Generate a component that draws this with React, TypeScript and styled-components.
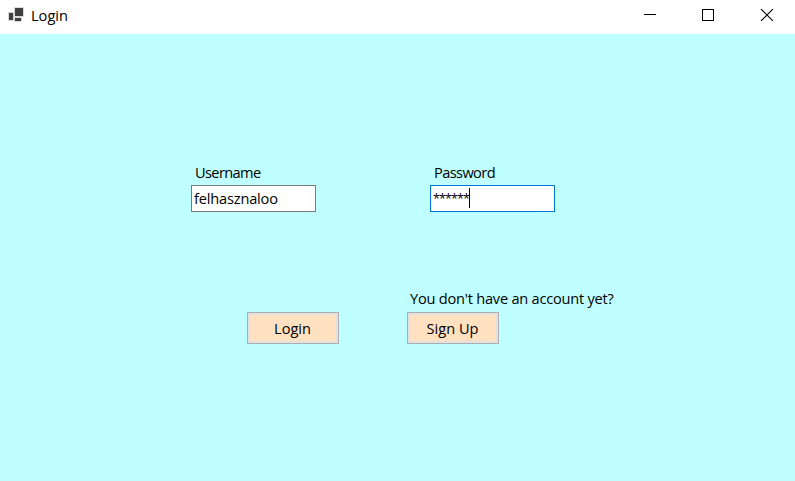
import React from "react";
import styled, { createGlobalStyle } from "styled-components";

const GlobalStyle = createGlobalStyle`
  * { box-sizing: border-box; }
  body { margin: 0; overflow: hidden; }
`;

const Window = styled.div`
  display: flex;
  flex-direction: column;
  width: 795px;
  height: 481px;
  background: #c0ffff;
  color: #000;
  font-family: "Segoe UI", "Open Sans", sans-serif;
  font-size: 14.6px;
  line-height: 18px;
`;

const TitleBar = styled.header`
  display: flex;
  align-items: flex-start;
  height: 34px;
  flex: none;
  padding-left: 8px;
  background: #fff;
`;

const AppIcon = styled.svg`
  display: block;
  flex: none;
  margin-top: 7px;
`;

const Text = styled.span<{ $spacing?: number }>`
  white-space: nowrap;
  letter-spacing: ${({ $spacing = 0 }) => $spacing}px;
`;

const Title = styled.div`
  flex: 1;
  padding: 6px 0 0 7px;
`;

const CaptionButton = styled.button`
  display: flex;
  justify-content: center;
  align-items: center;
  width: 58px;
  height: 30px;
  padding: 0;
  border: 0;
  background: transparent;
`;

const CaptionButtons = styled.div`
  display: flex;
  width: 174px;
`;

const Form = styled.main`
  display: flex;
  flex-direction: column;
  padding-top: 129px;
`;

const Fields = styled.div`
  display: flex;
  gap: 114px;
  padding-left: 191px;
`;

const Field = styled.label`
  display: flex;
  flex-direction: column;
  gap: 2px;
  width: 125px;
`;

const Caption = styled.div`
  height: 20px;
  padding-left: 4px;
`;

const Entry = styled.div<{ $focused?: boolean }>`
  display: flex;
  align-items: center;
  height: 27px;
  padding: 0 0 2px 2px;
  border: 1px solid ${({ $focused }) => ($focused ? "#0078d7" : "#7a7a7a")};
  background: #fff;
`;

const Mask = styled.span`
  width: 36px;
  height: 20px;
  font-size: 12.5px;
  line-height: 22px;
  letter-spacing: -0.86px;
  white-space: nowrap;
`;

const Caret = styled.i`
  width: 1px;
  height: 20px;
  margin-bottom: -1px;
  background: #000;
`;

const Actions = styled.div`
  display: flex;
  align-items: flex-end;
  gap: 68px;
  padding: 77px 0 0 247px;
`;

const SignUpGroup = styled.div`
  display: flex;
  flex-direction: column;
  gap: 3px;
`;

const Prompt = styled.div`
  height: 20px;
  padding-left: 3px;
`;

const Button = styled.button`
  width: 92px;
  height: 32px;
  padding: 0 1px 1px 0;
  border: 1px solid #adadad;
  background: #ffe0c0;
  box-shadow: inset 0 0 0 2px #e1e1e1;
  color: inherit;
  font: inherit;
`;

export default function App() {
  return (
    <Window>
      <GlobalStyle />
      <TitleBar>
        <AppIcon width="16" height="15" viewBox="0 0 16 15" shapeRendering="crispEdges">
          <path d="M6 0h10v10h-2v5H6v-1H0V5h6z" fill="#dadada" />
          <path d="M7 1h8v8H7zM1 6h4v7H1zM7 11h6v3H7z" fill="#404040" />
        </AppIcon>
        <Title><Text>Login</Text></Title>
        <CaptionButtons>
          <CaptionButton aria-label="Minimize">
            <svg width="12" height="12" shapeRendering="crispEdges"><path d="M0 5.5h12" stroke="#000" /></svg>
          </CaptionButton>
          <CaptionButton aria-label="Maximize">
            <svg width="12" height="12" shapeRendering="crispEdges"><path d="M.5.5h11v11H.5z" fill="none" stroke="#000" /></svg>
          </CaptionButton>
          <CaptionButton aria-label="Close">
            <svg width="14" height="12"><path d="M2 0l12 12M14 0L2 12" stroke="#000" strokeWidth="1.1" /></svg>
          </CaptionButton>
        </CaptionButtons>
      </TitleBar>
      <Form>
        <Fields>
          <Field>
            <Caption><Text $spacing={-0.62}>Username</Text></Caption>
            <Entry><Text $spacing={-0.18}>felhasznaloo</Text></Entry>
          </Field>
          <Field>
            <Caption><Text $spacing={-0.6}>Password</Text></Caption>
            <Entry $focused><Mask>******</Mask><Caret /></Entry>
          </Field>
        </Fields>
        <Actions>
          <Button><Text>Login</Text></Button>
          <SignUpGroup>
            <Prompt><Text $spacing={-0.23}>You don't have an account yet?</Text></Prompt>
            <Button><Text>Sign Up</Text></Button>
          </SignUpGroup>
        </Actions>
      </Form>
    </Window>
  );
}
